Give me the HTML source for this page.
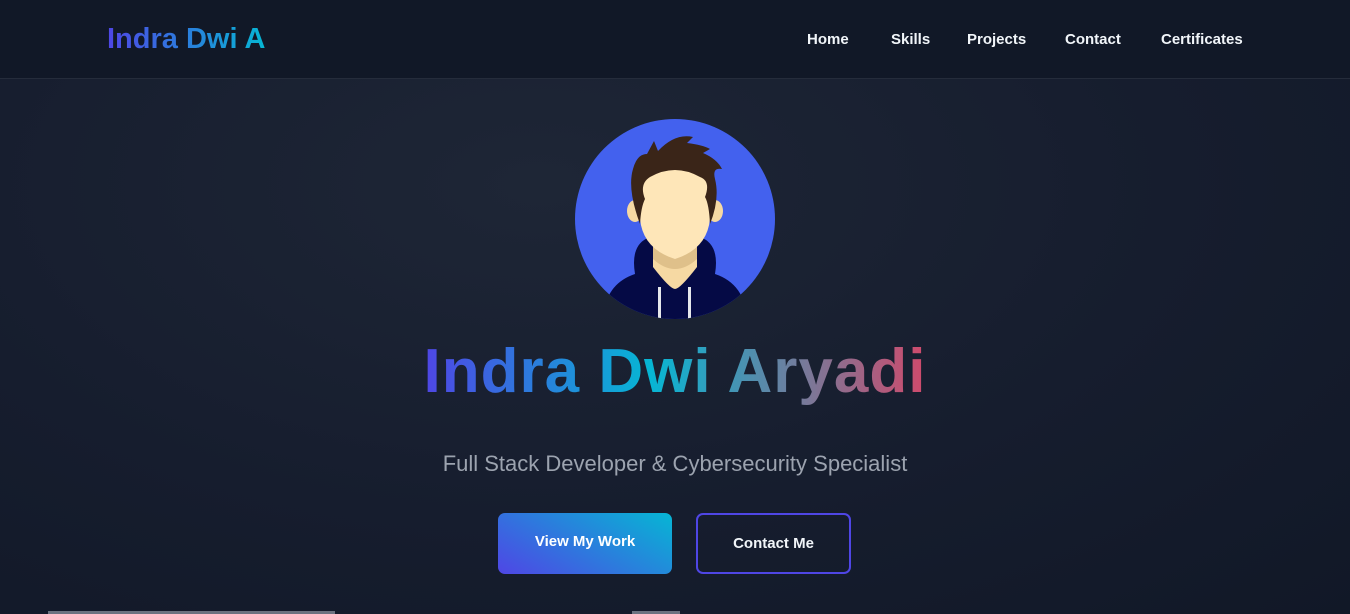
<!DOCTYPE html>
<html><head><meta charset="utf-8"><style>
*{margin:0;padding:0;box-sizing:border-box}
body{width:1350px;height:614px;overflow:hidden;font-family:"Liberation Sans",sans-serif;background:radial-gradient(ellipse at 40% 30%,#1e2636 0%,#161d2e 55%,#111827 100%);position:relative}
nav{height:79px;background:#111827;border-bottom:1px solid #252c3b;position:relative}
.logo{position:absolute;left:107px;top:23px;font-size:29px;font-weight:bold;background:linear-gradient(90deg,#4f46e5,#06b6d4);-webkit-background-clip:text;color:transparent}
.links{position:absolute;top:31px;font-size:15px;font-weight:bold;color:#f1f5f9}
.links span{position:absolute;white-space:nowrap}
h1{position:absolute;left:0;width:1350px;text-align:center;top:336px;font-size:62px;font-weight:bold;letter-spacing:1px}
h1 span{background:linear-gradient(90deg,#4f46e5,#06b6d4 45%,#d04a6c);-webkit-background-clip:text;color:transparent}
.sub{position:absolute;top:451px;width:1350px;text-align:center;color:#9ca3af;font-size:22px}
.b1{position:absolute;left:498px;top:513px;width:174px;height:61px;border-radius:7px;background:linear-gradient(30deg,#4f46e5,#06b6d4);color:#fff;font-weight:bold;font-size:15px;text-align:center;line-height:58px}
.b2{position:absolute;left:696px;top:513px;width:155px;height:61px;border-radius:7px;border:2px solid #4f46e5;color:#f1f5f9;font-weight:bold;font-size:15px;text-align:center;line-height:58px}
</style></head><body>
<nav><div class="logo">Indra Dwi A</div>
<div class="links"><span style="left:807px">Home</span><span style="left:891px">Skills</span><span style="left:967px">Projects</span><span style="left:1065px">Contact</span><span style="left:1161px">Certificates</span></div></nav>
<svg style="position:absolute;left:575px;top:119px" width="200" height="200" viewBox="0 0 200 200">
<defs><clipPath id="c"><circle cx="100" cy="100" r="100"/></clipPath></defs>
<circle cx="100" cy="100" r="100" fill="#4361ee"/>
<g clip-path="url(#c)">
<path d="M28 200 Q30 165 60 155 Q55 125 75 118 L125 118 Q145 125 140 155 Q170 165 172 200Z" fill="#050a45"/>
<path d="M78 120 L78 148 Q95 170 100 170 Q105 170 122 148 L122 120Z" fill="#f6d9a3"/>
<path d="M78 125 Q100 150 122 125 L122 140 Q100 160 78 140Z" fill="#dfc08a"/>
<ellipse cx="60" cy="92" rx="8" ry="11" fill="#f6d9a3"/><ellipse cx="140" cy="92" rx="8" ry="11" fill="#f6d9a3"/>
<path d="M65 60 Q65 42 100 42 Q135 42 135 60 L135 100 Q132 130 100 140 Q68 130 65 100Z" fill="#fee6b8"/>
<path d="M65 105 Q52 70 58 50 Q62 35 72 35 L79 22 L83 32 Q100 14 118 18 L112 24 Q128 26 135 30 L128 34 Q142 40 147 50 Q137 48 140 60 Q145 80 135 105 Q134 85 130 78 Q136 62 125 58 Q100 44 75 58 Q64 65 70 80 Q66 88 65 105Z" fill="#3a2518"/>
<rect x="83" y="168" width="3" height="35" fill="#e5e7eb"/><rect x="113" y="168" width="3" height="35" fill="#e5e7eb"/>
</g></svg>
<h1><span>Indra Dwi Aryadi</span></h1>
<div class="sub">Full Stack Developer &amp; Cybersecurity Specialist</div>
<div class="b1">View My Work</div><div class="b2">Contact Me</div>
<div style="position:absolute;left:48px;top:611px;width:287px;height:3px;background:#6b7280"></div>
<div style="position:absolute;left:632px;top:611px;width:48px;height:3px;background:#6b7280"></div>
</body></html>
